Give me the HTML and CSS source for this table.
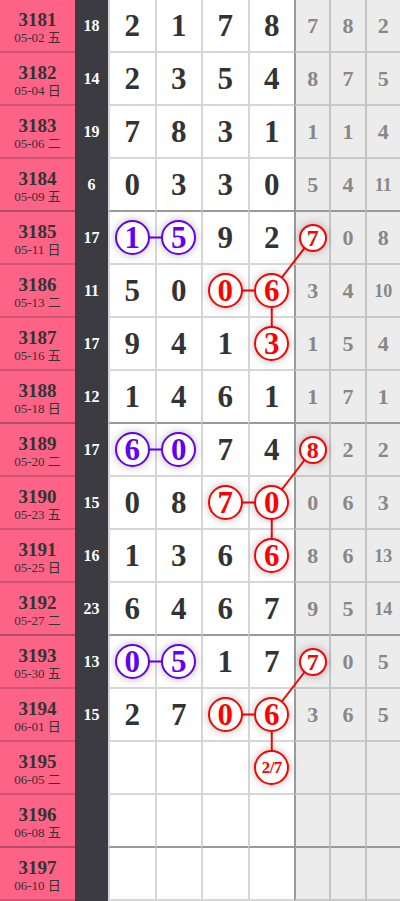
FILE: index.html
```html
<!DOCTYPE html>
<html lang="zh">
<head>
<meta charset="utf-8">
<title>走势图</title>
<link rel="stylesheet" href="styles.css">
</head>
<body>
<div class="board">
  <div class="row"><div class="c-issue"><b>3181</b><span>05-02 五</span></div><div class="c-sum">18</div><div class="c-n">2</div><div class="c-n">1</div><div class="c-n">7</div><div class="c-n">8</div><div class="c-g">7</div><div class="c-g">8</div><div class="c-g">2</div></div>
  <div class="row"><div class="c-issue"><b>3182</b><span>05-04 日</span></div><div class="c-sum">14</div><div class="c-n">2</div><div class="c-n">3</div><div class="c-n">5</div><div class="c-n">4</div><div class="c-g">8</div><div class="c-g">7</div><div class="c-g">5</div></div>
  <div class="row"><div class="c-issue"><b>3183</b><span>05-06 二</span></div><div class="c-sum">19</div><div class="c-n">7</div><div class="c-n">8</div><div class="c-n">3</div><div class="c-n">1</div><div class="c-g">1</div><div class="c-g">1</div><div class="c-g">4</div></div>
  <div class="row q"><div class="c-issue"><b>3184</b><span>05-09 五</span></div><div class="c-sum">6</div><div class="c-n">0</div><div class="c-n">3</div><div class="c-n">3</div><div class="c-n">0</div><div class="c-g">5</div><div class="c-g">4</div><div class="c-g sm">11</div></div>

  <div class="row"><div class="c-issue"><b>3185</b><span>05-11 日</span></div><div class="c-sum">17</div><div class="c-n"><span class="ball purple">1</span></div><div class="c-n"><span class="ball purple">5</span></div><div class="c-n">9</div><div class="c-n">2</div><div class="c-g"><span class="ball red small">7</span></div><div class="c-g">0</div><div class="c-g">8</div></div>
  <div class="row"><div class="c-issue"><b>3186</b><span>05-13 二</span></div><div class="c-sum">11</div><div class="c-n">5</div><div class="c-n">0</div><div class="c-n"><span class="ball red">0</span></div><div class="c-n"><span class="ball red">6</span></div><div class="c-g">3</div><div class="c-g">4</div><div class="c-g sm">10</div></div>
  <div class="row"><div class="c-issue"><b>3187</b><span>05-16 五</span></div><div class="c-sum">17</div><div class="c-n">9</div><div class="c-n">4</div><div class="c-n">1</div><div class="c-n"><span class="ball red">3</span></div><div class="c-g">1</div><div class="c-g">5</div><div class="c-g">4</div></div>
  <div class="row q"><div class="c-issue"><b>3188</b><span>05-18 日</span></div><div class="c-sum">12</div><div class="c-n">1</div><div class="c-n">4</div><div class="c-n">6</div><div class="c-n">1</div><div class="c-g">1</div><div class="c-g">7</div><div class="c-g">1</div></div>

  <div class="row"><div class="c-issue"><b>3189</b><span>05-20 二</span></div><div class="c-sum">17</div><div class="c-n"><span class="ball purple">6</span></div><div class="c-n"><span class="ball purple">0</span></div><div class="c-n">7</div><div class="c-n">4</div><div class="c-g"><span class="ball red small">8</span></div><div class="c-g">2</div><div class="c-g">2</div></div>
  <div class="row"><div class="c-issue"><b>3190</b><span>05-23 五</span></div><div class="c-sum">15</div><div class="c-n">0</div><div class="c-n">8</div><div class="c-n"><span class="ball red">7</span></div><div class="c-n"><span class="ball red">0</span></div><div class="c-g">0</div><div class="c-g">6</div><div class="c-g">3</div></div>
  <div class="row"><div class="c-issue"><b>3191</b><span>05-25 日</span></div><div class="c-sum">16</div><div class="c-n">1</div><div class="c-n">3</div><div class="c-n">6</div><div class="c-n"><span class="ball red">6</span></div><div class="c-g">8</div><div class="c-g">6</div><div class="c-g sm">13</div></div>
  <div class="row q"><div class="c-issue"><b>3192</b><span>05-27 二</span></div><div class="c-sum">23</div><div class="c-n">6</div><div class="c-n">4</div><div class="c-n">6</div><div class="c-n">7</div><div class="c-g">9</div><div class="c-g">5</div><div class="c-g sm">14</div></div>

  <div class="row"><div class="c-issue"><b>3193</b><span>05-30 五</span></div><div class="c-sum">13</div><div class="c-n"><span class="ball purple">0</span></div><div class="c-n"><span class="ball purple">5</span></div><div class="c-n">1</div><div class="c-n">7</div><div class="c-g"><span class="ball red small">7</span></div><div class="c-g">0</div><div class="c-g">5</div></div>
  <div class="row"><div class="c-issue"><b>3194</b><span>06-01 日</span></div><div class="c-sum">15</div><div class="c-n">2</div><div class="c-n">7</div><div class="c-n"><span class="ball red">0</span></div><div class="c-n"><span class="ball red">6</span></div><div class="c-g">3</div><div class="c-g">6</div><div class="c-g">5</div></div>
  <div class="row"><div class="c-issue"><b>3195</b><span>06-05 二</span></div><div class="c-sum"></div><div class="c-n"></div><div class="c-n"></div><div class="c-n"></div><div class="c-n"><span class="ball red frac">2/7</span></div><div class="c-g"></div><div class="c-g"></div><div class="c-g"></div></div>
  <div class="row q"><div class="c-issue"><b>3196</b><span>06-08 五</span></div><div class="c-sum"></div><div class="c-n"></div><div class="c-n"></div><div class="c-n"></div><div class="c-n"></div><div class="c-g"></div><div class="c-g"></div><div class="c-g"></div></div>
  <div class="row"><div class="c-issue"><b>3197</b><span>06-10 日</span></div><div class="c-sum"></div><div class="c-n"></div><div class="c-n"></div><div class="c-n"></div><div class="c-n"></div><div class="c-g"></div><div class="c-g"></div><div class="c-g"></div></div>

  <svg class="links" width="400" height="901" viewBox="0 0 400 901">
    <g stroke-width="2" fill="none">
      <line class="lp" x1="132.25" y1="237.5" x2="178.75" y2="237.5"/>
      <line class="lr" x1="225.25" y1="290.5" x2="271.75" y2="290.5"/>
      <line class="lr" x1="271.75" y1="290.5" x2="312.67" y2="237.5"/>
      <line class="lr" x1="271.75" y1="290.5" x2="271.75" y2="343.5"/>

      <line class="lp" x1="132.25" y1="449.5" x2="178.75" y2="449.5"/>
      <line class="lr" x1="225.25" y1="502.5" x2="271.75" y2="502.5"/>
      <line class="lr" x1="271.75" y1="502.5" x2="312.67" y2="449.5"/>
      <line class="lr" x1="271.75" y1="502.5" x2="271.75" y2="555.5"/>

      <line class="lp" x1="132.25" y1="661.5" x2="178.75" y2="661.5"/>
      <line class="lr" x1="225.25" y1="714.5" x2="271.75" y2="714.5"/>
      <line class="lr" x1="271.75" y1="714.5" x2="312.67" y2="661.5"/>
      <line class="lr" x1="271.75" y1="714.5" x2="271.75" y2="767.5"/>
    </g>
  </svg>
</div>
</body>
</html>
```

FILE: styles.css
```css
html, body {
  margin: 0;
  padding: 0;
  background: #fff;
}

.board {
  position: relative;
  width: 400px;
  font-family: "Liberation Serif", "Times New Roman", "Noto Sans CJK SC", serif;
  color: #333;
}

.row {
  display: grid;
  grid-template-columns: 75px 33px 46.5px 46.5px 46.5px 46.5px 35.33px 35.33px 35.34px;
  height: 53px;
}

.row > div {
  box-sizing: border-box;
  height: 53px;
  border-bottom: 2px solid transparent;
  display: flex;
  align-items: center;
  justify-content: center;
  line-height: 1;
}

.c-issue {
  flex-direction: column;
  background: #fc6386;
  border-bottom-color: #cf5673 !important;
  padding-top: 4px;
}

.c-issue b {
  display: block;
  font-size: 19px;
  line-height: 20px;
  font-weight: bold;
  color: #333;
}

.c-issue span {
  display: block;
  font-size: 13px;
  line-height: 16px;
  color: #333;
}

.c-sum {
  background: #3b3b41;
  color: #fff;
  font-weight: bold;
  font-size: 16px;
}

.c-n {
  background: #fff;
  border-left: 2px solid #d6d6d6;
  border-bottom-color: #d6d6d6 !important;
  font-size: 31px;
  font-weight: bold;
  color: #333;
}

.c-g {
  background: #ececec;
  border-left: 2px solid #c4c4c4;
  border-bottom-color: #c8c8c8 !important;
  font-size: 22px;
  font-weight: bold;
  color: #888;
}

.c-n + .c-g {
  border-left-color: #9a9a9a;
}

.c-g.sm {
  font-size: 18px;
}

.row.q .c-n,
.row.q .c-g {
  border-bottom-color: #9a9a9a !important;
}

.row.q .c-issue {
  border-bottom-color: #b34d65 !important;
}

.ball {
  position: relative;
  z-index: 2;
  box-sizing: border-box;
  width: 35px;
  height: 35px;
  border-radius: 50%;
  border: 2px solid;
  background: #fff;
  display: flex;
  align-items: center;
  justify-content: center;
  font-size: 31px;
  font-weight: bold;
  line-height: 1;
  box-shadow: 0 0 8px rgba(0, 0, 0, 0.28);
}

.ball.purple {
  color: #6400f5;
  border-color: #6400f5;
}

.ball.red {
  color: #f00;
  border-color: #f00;
}

.ball.small {
  width: 28px;
  height: 28px;
  font-size: 24px;
}

.ball.frac {
  font-size: 17px;
  letter-spacing: -0.5px;
}

.links {
  position: absolute;
  top: 0;
  left: 0;
  z-index: 1;
  pointer-events: none;
}

.links .lp {
  stroke: #6400f5;
}

.links .lr {
  stroke: #f00;
}
```
